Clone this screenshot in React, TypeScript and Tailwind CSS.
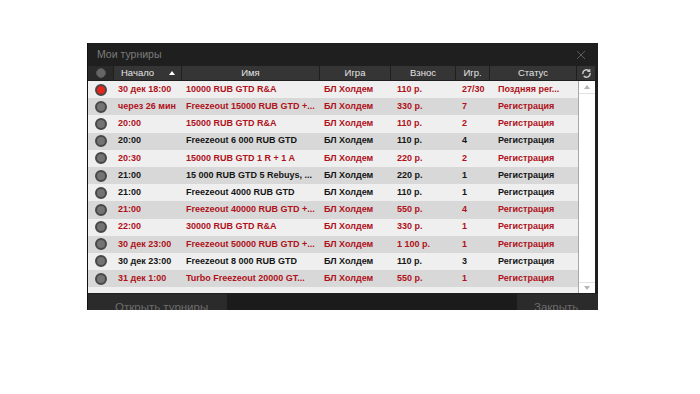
import React from "react";

type Row = {
  time: string;
  name: string;
  fee: string;
  players: string;
  status: string;
  red: boolean;
  live?: boolean;
};

const rows: Row[] = [
  { time: "30 дек 18:00", name: "10000 RUB GTD R&A", fee: "110 р.", players: "27/30", status: "Поздняя рег...", red: true, live: true },
  { time: "через 26 мин", name: "Freezeout 15000 RUB GTD +...", fee: "330 р.", players: "7", status: "Регистрация", red: true },
  { time: "20:00", name: "15000 RUB GTD R&A", fee: "110 р.", players: "2", status: "Регистрация", red: true },
  { time: "20:00", name: "Freezeout 6 000 RUB GTD", fee: "110 р.", players: "4", status: "Регистрация", red: false },
  { time: "20:30", name: "15000 RUB GTD 1 R + 1 A", fee: "220 р.", players: "2", status: "Регистрация", red: true },
  { time: "21:00", name: "15 000 RUB GTD 5 Rebuys, ...", fee: "220 р.", players: "1", status: "Регистрация", red: false },
  { time: "21:00", name: "Freezeout 4000 RUB GTD", fee: "110 р.", players: "1", status: "Регистрация", red: false },
  { time: "21:00", name: "Freezeout 40000 RUB GTD +...", fee: "550 р.", players: "4", status: "Регистрация", red: true },
  { time: "22:00", name: "30000 RUB GTD R&A", fee: "330 р.", players: "1", status: "Регистрация", red: true },
  { time: "30 дек 23:00", name: "Freezeout 50000 RUB GTD +...", fee: "1 100 р.", players: "1", status: "Регистрация", red: true },
  { time: "30 дек 23:00", name: "Freezeout 8 000 RUB GTD", fee: "110 р.", players: "3", status: "Регистрация", red: false },
  { time: "31 дек 1:00", name: "Turbo Freezeout 20000 GT...", fee: "550 р.", players: "1", status: "Регистрация", red: true },
];

function Dot({ live }: { live?: boolean }) {
  return (
    <span
      className={
        "block w-[12px] h-[12px] rounded-full border-2 border-[#474747] " +
        (live ? "bg-[#e3261e]" : "bg-[#737373]")
      }
    />
  );
}

function RefreshIcon() {
  return (
    <svg width="11" height="11" viewBox="0 0 12 12" fill="none">
      <path d="M2 6a4 4 0 0 1 6.5-3.1" stroke="#d0d0d0" strokeWidth="1.6" strokeLinecap="round" />
      <path d="M10 6a4 4 0 0 1-6.5 3.1" stroke="#d0d0d0" strokeWidth="1.6" strokeLinecap="round" />
      <path d="M9.6 1.2v2.6H7" stroke="#d0d0d0" strokeWidth="1.2" />
    </svg>
  );
}

export default function App() {
  const headCell = "h-full bg-[#353535] flex items-center justify-center text-[#e4e4e4]";

  return (
    <div className="w-[700px] h-[394px] bg-white overflow-hidden pt-[43px] pl-[87px]" style={{ fontFamily: '"Liberation Sans", Arial, sans-serif' }}>
      <div className="w-[511px] h-[267px] bg-[#1f1f1f] border-l border-[#111111] flex flex-col overflow-hidden">
        {/* Title bar */}
        <div className="h-[23px] shrink-0 flex items-center justify-between pl-[9px] pr-[12px]">
          <span className="text-[10.5px] text-[#7c7c7c]">Мои турниры</span>
          <svg width="10" height="10" viewBox="0 0 10 10">
            <path d="M1 1l8 8M9 1l-8 8" stroke="#5c5c5c" strokeWidth="1" />
          </svg>
        </div>

        {/* Header */}
        <div className="h-[14px] shrink-0 flex gap-px text-[9.5px] pr-[3px]">
          <div className="w-[25px] h-full bg-[#2a2a2a] flex items-center justify-center">
            <span className="block w-[10px] h-[10px] rounded-full bg-[#666666] border border-[#555555]" />
          </div>
          <div className="w-[67px] h-full bg-[#353535] flex items-center justify-between pl-[7px] pr-[6px] text-[#e4e4e4]">
            <span>Начало</span>
            <span className="w-0 h-0 border-l-[3px] border-r-[3px] border-b-[4px] border-l-transparent border-r-transparent border-b-white" />
          </div>
          <div className={headCell + " w-[137px]"}>Имя</div>
          <div className={headCell + " w-[70px]"}>Игра</div>
          <div className={headCell + " w-[64px]"}>Взнос</div>
          <div className={headCell + " w-[33px]"}>Игр.</div>
          <div className={headCell + " w-[86px]"}>Статус</div>
          <div className="flex-1 h-full bg-[#353535] flex items-center justify-center">
            <RefreshIcon />
          </div>
        </div>

        {/* Body */}
        <div className="h-[212px] shrink-0 flex mt-px pr-[3px]">
          <div className="w-[490px] bg-[#efefef] text-[9px] font-bold">
            {rows.map((r, i) => (
              <div
                key={i}
                className={
                  "h-[17.2px] flex items-center " +
                  (i % 2 === 0 ? "bg-[#efefef] " : "bg-[#d8d8d8] ") +
                  (r.red ? "text-[#b0111a]" : "text-[#151515]")
                }
              >
                <div className="w-[26px] flex justify-center">
                  <Dot live={r.live} />
                </div>
                <div className="w-[68px] pl-[4px] whitespace-nowrap">{r.time}</div>
                <div className="w-[138px] pl-[4px] whitespace-nowrap">{r.name}</div>
                <div className="w-[71px] pl-[4px] whitespace-nowrap">БЛ Холдем</div>
                <div className="w-[65px] pl-[6px] whitespace-nowrap">{r.fee}</div>
                <div className="w-[34px] pl-[6px] whitespace-nowrap">{r.players}</div>
                <div className="w-[88px] pl-[8px] whitespace-nowrap">{r.status}</div>
              </div>
            ))}
          </div>
          {/* Scrollbar */}
          <div className="flex-1 bg-white border-l border-[#a8a8a8] flex flex-col justify-between">
            <div className="h-[13px] flex items-center justify-center border-b border-[#e2e2e2]">
              <span className="w-0 h-0 border-l-[3px] border-r-[3px] border-b-[4px] border-l-transparent border-r-transparent border-b-[#b5b5b5]" />
            </div>
            <div className="h-[11px] flex items-center justify-center border-t border-[#e2e2e2]">
              <span className="w-0 h-0 border-l-[3px] border-r-[3px] border-t-[4px] border-l-transparent border-r-transparent border-t-[#b5b5b5]" />
            </div>
          </div>
        </div>

        {/* Footer */}
        <div className="flex-1 flex mt-px text-[11.5px] text-[#6c6c6c]">
          <div className="w-[139px] bg-[#2b2b2b] pl-[27px] pt-[8px] leading-none whitespace-nowrap">Открыть турниры</div>
          <div className="flex-1 bg-[#1b1b1b]" />
          <div className="w-[81px] bg-[#2b2b2b] pl-[17px] pt-[8px] leading-none">Закрыть</div>
        </div>
      </div>
    </div>
  );
}
